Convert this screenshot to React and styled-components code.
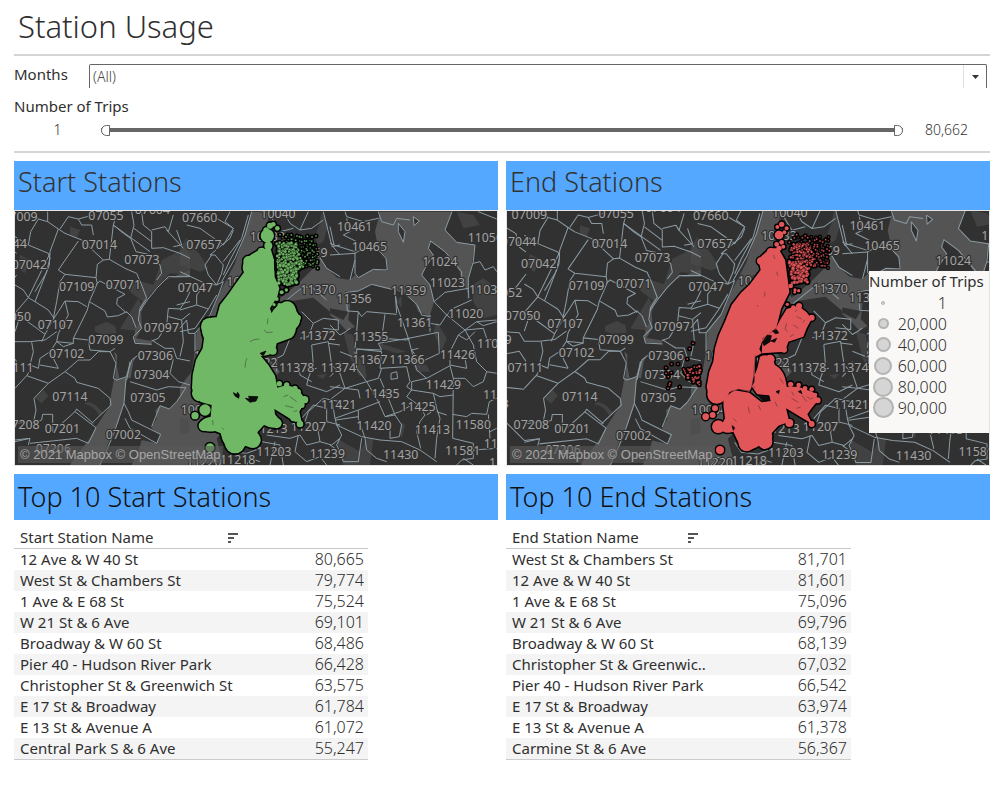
import React, { useState } from "react";
import styled, { createGlobalStyle } from "styled-components";

const GlobalStyle = createGlobalStyle`
  * { box-sizing: border-box; }
  body {
    margin: 0;
    background: #fff;
    color: #2f2f2f;
    font-family: "Noto Sans", "Open Sans", sans-serif;
    font-size: 15px;
    line-height: 20px;
  }
`;

const Page = styled.main`
  padding: 0 7px 40px 14px;
`;

const Title = styled.h1`
  margin: 0;
  height: 56px;
  padding: 6px 4px 0;
  border-bottom: 2px solid #d4d4d4;
  font-size: 31px;
  line-height: 40px;
  font-weight: 300;
`;

const Filters = styled.section`
  padding: 8px 0 11px;
  border-bottom: 2px solid #d4d4d4;
`;

const MonthRow = styled.div`
  display: grid;
  grid-template-columns: 75px 1fr;
  padding-right: 3px;
`;

const FieldLabel = styled.label`
  display: block;
`;

const SelectBox = styled.div`
  display: grid;
  grid-template-columns: 1fr 23px;
  height: 24px;
  border: 1px solid #666;
  border-bottom: 0;
  border-radius: 2px 2px 0 0;
`;

const MonthSelect = styled.select`
  grid-area: 1 / 1 / 2 / 3;
  appearance: none;
  border: 0;
  padding: 0 3px;
  background: transparent;
  color: #444;
  font: 300 14px/20px "Noto Sans", "Open Sans", sans-serif;
`;

const Caret = styled.span`
  grid-area: 1 / 2 / 2 / 3;
  display: grid;
  place-items: center;
  border-left: 1px solid #e0e0e0;
  pointer-events: none;
`;

const TripsFilter = styled.fieldset`
  margin: 8px 0 0;
  padding: 0;
  border: 0;
`;

const TripsLegend = styled.legend`
  padding: 0;
`;

const SliderRow = styled.div`
  display: grid;
  grid-template-columns: 87px 1fr 87px;
  align-items: center;
  margin-top: 4px;
  height: 20px;
`;

const SliderValue = styled.output`
  text-align: center;
  font-size: 14px;
  font-weight: 300;
  color: #333;
`;

const Range = styled.div`
  display: grid;
  align-items: center;
  height: 12px;
`;

const Rail = styled.div`
  grid-area: 1 / 1;
  height: 4px;
  background: #666;
`;

const RangeInput = styled.input`
  grid-area: 1 / 1;
  appearance: none;
  width: 100%;
  height: 12px;
  margin: 0;
  background: transparent;
  pointer-events: none;
  &::-webkit-slider-thumb {
    appearance: none;
    pointer-events: auto;
    width: 9px;
    height: 11px;
    background: #fff;
    border: 1px solid #666;
    border-radius: ${(p) => (p.$end ? "0 6px 6px 0" : "6px 0 0 6px")};
  }
`;

const Columns = styled.div`
  display: grid;
  grid-template-columns: 1fr 1fr;
  column-gap: 8px;
  padding-top: 8px;
`;

const Band = styled.h2`
  margin: 0;
  padding: ${(p) => (p.$strong ? "5px 4px" : "3px 4px 10px")};
  background: #55a8ff;
  color: ${(p) => (p.$strong ? "#111" : "#333")};
  font-size: 27px;
  line-height: 36px;
  font-weight: 300;
`;

const MapFrame = styled.div`
  position: relative;
  border: 1px solid #e4e4e4;
  background: #313131;
`;

const MapDrawing = styled.svg`
  display: block;
  width: 100%;
  height: auto;
  font-family: "Noto Sans", "Open Sans", sans-serif;
`;

const Attribution = styled.div`
  position: absolute;
  left: 3px;
  bottom: 2px;
  padding: 0 2px;
  background: rgba(90, 90, 90, 0.6);
  color: #a6a6a6;
  font: 13px/17px "Liberation Sans", Arial, sans-serif;
`;

const LegendCard = styled.aside`
  position: absolute;
  right: 0;
  top: 60px;
  width: 120px;
  height: 162px;
  background: #f9f8f7;
  white-space: nowrap;
`;

const LegendTitle = styled.h3`
  margin: 0;
  padding-bottom: 1px;
  font-size: 15px;
  line-height: 20px;
  font-weight: 400;
`;

const LegendList = styled.ul`
  margin: 0;
  padding: 0;
  list-style: none;
`;

const LegendItem = styled.li`
  display: grid;
  grid-template-columns: 28px 50px;
  align-items: center;
  height: 21px;
  font-size: 16px;
  font-weight: 300;
  text-align: right;
`;

const Dot = styled.span`
  justify-self: center;
  width: ${(p) => p.$size}px;
  height: ${(p) => p.$size}px;
  border: ${(p) => (p.$size > 8 ? 2 : 1)}px solid #b3b3b3;
  border-radius: 50%;
  background: #d5d5d5;
`;

const TableWrap = styled.div`
  padding-top: 8px;
`;

const Table = styled.table`
  width: ${(p) => p.$width}px;
  max-width: 100%;
  border-collapse: separate;
  border-spacing: 0;
  table-layout: fixed;
  border-bottom: 1px solid #ccc;
  white-space: nowrap;
`;

const NameHead = styled.th`
  width: ${(p) => p.$width}px;
  height: 20px;
  padding: 0 10px 1px 6px;
  border-bottom: 1px solid #c8c8c8;
  font-weight: 400;
  line-height: 19px;
`;

const ValueHead = styled.th`
  padding: 0;
  border-bottom: 1px solid #c8c8c8;
`;

const HeadContent = styled.div`
  display: flex;
  align-items: center;
  justify-content: space-between;
`;

const SortButton = styled.button`
  display: block;
  padding: 0;
  border: 0;
  background: transparent;
  line-height: 0;
`;

const Row = styled.tr`
  height: 21px;
  &:nth-child(even) { background: #f4f4f4; }
`;

const NameCell = styled.th`
  padding: 0 0 0 6px;
  font-weight: 400;
  line-height: 21px;
  text-align: left;
`;

const ValueCell = styled.td`
  padding: 0 4px 0 0;
  font-size: 16px;
  font-weight: 300;
  line-height: 21px;
  text-align: right;
`;

/* Map geometry. One drawing unit is a third of a pixel; each area has its own origin. */
const WEST = "translate(-15 -18)";
const MIDDLE = "translate(495 -18)";
const EAST = "translate(945 -18)";

const LAND_PATCHES = {
  west: [
    "M455 165 L525 130 540 150 540 210 480 205 455 230 400 290 365 265 350 245 380 225 430 240z",
    "M330 372 L385 280 400 310 385 345 385 378z",
    "M255 365 L290 350 315 362 320 385 275 388 255 380z",
    "M75 580 L100 555 115 572 95 595z",
    "M225 590 Q255 590 280 625 L268 632 Q250 600 225 598z",
    "M30 150 L60 165 45 205 25 190z",
    "M180 65 L210 75 200 100 180 90z",
  ],
  middle: [
    "M425 20 L445 60 430 110 412 120 405 90 418 60z",
    "M20 100 L60 150 85 190 60 200 0 180 0 130z",
    "M410 510 L440 507 428 523z",
    "M0 640 L25 640 30 680 0 690z",
  ],
  east: [
    "M40 380 L70 390 75 440 105 480 110 520 85 510 60 460z",
    "M320 350 L350 400 335 440 310 380z",
    "M425 240 L460 220 500 250 500 330 460 340 430 290z",
    "M380 20 L430 30 450 60 400 70z",
    "M150 415 L230 440 200 445 150 430z",
    "M215 650 L225 660 215 700 208 680z",
    "M200 290 L215 270 215 310z",
    "M245 470 L290 480 300 500 260 500z",
    "M20 700 L90 740 110 700 130 700 120 780 40 780z",
  ],
};

const WATER = {
  west: [
    "M312 522 L350 518 345 560 342 595 325 650 290 725 268 780 180 780 205 745 240 700 258 665 298 605 303 570z",
    "M312 440 L318 470 316 522 328 520 320 480 322 450z",
    "M345 518 L360 470 382 450 370 470 362 520z",
    "M375 375 L388 350 388 310 400 285 460 228 540 195 540 215 470 220 415 270 393 320 396 370 378 400 425 408 425 418 372 412z",
    "M545 548 L528 548 500 590 478 612 450 602 436 615 440 640 424 670 450 690 440 715 395 705 385 740 365 780 545 780z",
  ],
  middle: [
    "M215 20 L192 95 165 175 120 262 92 330 50 380 45 440 35 500 0 545 0 780 130 780 110 700 300 500 250 440 300 300 320 290 400 278 450 320 480 340 480 225 445 195 415 150 400 190 350 240 300 280 270 240 250 120 268 20z",
  ],
  east: [
    "M150 20 L366 20 345 75 380 112 435 120 425 180 415 230 420 285 405 240 395 230 390 200 345 140 300 108 295 130 310 150 285 190 275 210 300 240 312 290 300 330 300 378 290 330 265 320 255 295 230 270 195 255 165 250 125 238 85 258 45 258 60 300 55 345 75 365 50 378 25 350 0 330 0 215 60 225 75 210 85 218 130 193 175 198 168 160 145 130 135 80z",
  ],
};

const LAND_OVER = ["M205 55 L225 80 220 112 205 80z", "M250 35 L268 48 252 62z", "M55 320 L0 310 0 325 40 345z"];

const LINES = {
  west: [
    "-60,60 -10,90 0,130 20,145", "-60,290 -10,250 20,210", "-60,380 0,385 15,410 60,410 105,405 140,380", "-60,545 15,553", "-50,640 0,690 15,705 60,700", "-55,450 0,440 20,470",
    "70,20 85,42 113,50 113,20", "113,50 145,72 165,85 215,105 280,165 298,163 345,190 380,205 395,240 410,280 390,310 385,345 395,370 370,395 375,415 425,418",
    "85,42 62,80 55,120 115,145 120,160 108,205 75,260", "55,120 15,95", "145,72 120,140 118,180 75,290", "15,240 40,255 55,278 10,330", "55,278 120,145",
    "55,278 75,290 115,315 132,340 105,388 60,355 30,335 15,380", "105,388 95,410", "250,30 205,42 175,35 150,72", "205,42 215,60 245,60 250,90",
    "205,108 145,195 165,208 258,218 262,178 280,165", "298,163 310,60 340,85 362,100 378,140 425,150 450,180 455,205 440,225", "310,60 322,20", "362,100 372,60 365,20",
    "372,70 425,110 425,130 460,128 510,145 540,160", "310,60 420,140", "395,20 400,60 425,80 425,110", "425,75 465,65 475,80 490,30", "470,75 520,130", "500,75 515,120 490,125",
    "258,218 262,235 238,290 232,315 205,370 190,400 190,415 140,410", "238,290 285,318 292,336 325,332 350,320 365,335 378,368",
    "258,238 270,228 345,268 322,280 320,298 345,320 350,325", "165,208 150,230 140,290 130,340", "230,305 205,290 165,288 145,320 130,342", "165,288 175,330 145,385 140,410 120,440 145,490",
    "65,412 70,440 60,480 85,490 90,460 120,440", "145,490 90,480", "190,400 235,405 240,435 300,440 315,430", "190,415 160,425 140,410",
    "15,550 50,512 115,535 165,500 205,465 240,465 265,440 300,440 318,475 310,520 320,525 350,515 365,465 385,450", "50,512 65,490", "165,500 195,520 200,532 265,550 300,580 303,600 245,655",
    "115,535 72,580 78,615 70,655 95,645 98,628 128,628 128,680 195,620 258,668 235,715 200,700 60,715", "15,655 60,650", "15,710 60,700 55,720", "195,620 200,612 250,655",
    "348,520 342,595 355,620 365,645 452,688 440,715 360,670 345,640", "342,595 310,690 270,780", "425,405 465,430 490,430 500,460 540,468", "490,462 480,505 505,530 540,540",
    "540,215 475,215 440,250 412,285 388,320", "540,260 528,285 510,312 475,310 470,360 445,400 425,408", "475,335 515,345 540,325", "515,345 520,410 510,455",
    "360,530 440,555 475,545 528,548 500,590 478,612 450,602 425,665", "360,470 350,525", "500,300 540,290",
  ],
  middle: [
    "110,40 160,70 130,120 95,95 60,70 20,60", "150,20 135,50 160,70", "160,75 150,100 90,150 105,150 130,180 125,205 110,240 75,235 0,200", "75,180 95,150", "75,180 85,210 110,240",
    "215,20 195,90 165,160 125,230", "205,30 185,100 150,165 130,210", "180,105 130,170", "110,240 130,230 115,270 90,330 45,385 45,450", "0,315 50,300 50,270 70,245", "50,300 85,312 45,370 0,380", "85,312 110,270",
    "0,370 20,345 25,385 45,385", "310,20 330,55 360,75 395,70 430,45", "360,75 385,20", "270,30 300,80 340,70", "430,20 440,60 455,120 480,150", "415,150 440,190 480,215", "455,125 480,120",
    "270,350 290,310 320,285 370,245 400,250 440,285", "365,320 400,355 430,340 475,345 475,375 430,370", "400,355 385,395 360,400", "395,420 400,480 385,520 380,540 440,560 480,540", "395,420 445,410 455,480 475,500",
    "330,400 310,450 290,460 290,500", "355,480 360,510 395,530", "410,490 380,495", "445,415 480,420", "365,640 400,600 440,610 440,650 480,660", "375,650 385,620 430,580 480,590",
    "245,710 300,720 310,780", "285,710 270,780", "260,690 330,700 360,690 380,720 420,710 415,680 440,650", "355,690 345,740 380,770 420,755 440,780", "130,710 150,740 200,745 240,730", "60,780 80,755 120,760", "420,710 455,720 480,700",
    "200,780 210,760 240,770",
  ],
  east: [
    "45,20 50,35 100,50 145,40", "0,65 12,120 75,140 75,165 60,225", "12,120 0,115", "0,150 75,145", "75,145 100,130 145,135 168,160 172,195 130,193 85,218 75,205 75,165", "50,40 60,80 40,90 80,110", "145,20 155,50 190,60 200,40 240,45",
    "205,55 225,80 220,112 205,80 205,55", "250,35 268,48 252,62 250,35", "366,20 345,75 380,112 435,120 430,170 415,220 415,280", "445,20 500,42", "395,230 395,200 345,140 302,108 295,130 310,150 285,190 275,210 300,240 312,290",
    "430,175 450,170 465,195 490,185 500,200", "200,325 195,255 125,238 85,258 48,262 52,318 85,320 95,335 110,320 200,328", "165,328 155,400 230,405 240,400", "85,320 80,380 75,430", "195,255 200,300 235,400 260,495 290,520",
    "235,400 325,382 328,445 275,470", "235,400 145,415 155,435 80,432 80,460 30,440", "80,432 155,440 150,490 230,485 240,530 230,545 245,555", "230,270 262,300 275,330 300,335 300,380", "265,430 245,435 260,455",
    "300,330 300,355 330,360 350,330 312,290 345,262 415,250", "350,330 405,375 440,350 500,345", "350,330 370,310 425,285", "405,375 385,390 360,440 360,480 410,490 405,460", "440,350 460,362 500,350", "405,375 430,420 440,470 470,500 500,505", "405,375 460,370 470,400 500,410", "385,390 410,405 435,380",
    "290,520 360,482 370,520 405,520 430,545 460,530 470,500", "370,520 368,700", "368,628 410,635 425,625 470,628 478,590 500,580", "475,628 480,700", "368,700 430,715 430,760 395,765 380,780", "430,735 500,730", "480,680 500,670",
    "110,530 45,550 0,545", "110,530 80,490 75,440", "30,470 28,500 45,550 85,555 90,580", "45,550 5,580 15,640 85,615 150,590", "110,530 145,520 155,490", "110,530 145,590 165,635 195,630 175,580 150,520",
    "85,615 85,640 105,700 110,735", "165,635 210,620 245,600", "18,645 85,635", "195,630 215,660 208,695 180,700 180,660", "245,555 245,530 290,520", "245,555 230,575 265,600 285,630 270,650 260,680 272,730",
    "245,555 310,565 320,610 290,630", "310,565 330,575 370,570", "320,610 330,640 320,700 315,760", "350,630 320,620", "15,640 20,660 95,695 150,705 215,710 270,735 320,770", "20,660 35,690 20,720 30,740 0,720", "95,700 85,770 40,770 30,740",
    "183,505 183,523 203,520 200,500 183,505", "110,735 140,760 170,770", "0,500 10,505 0,515", "0,360 30,390 50,378 60,370", "400,760 430,780",
  ],
};

const LABELS = {
  west: [
    [30, 48, "07009"], [-2, 128, "07044"], [-44, 279, "07052"], [58, 193, "07042"], [288, 45, "07055"], [427, 26, "07604"], [268, 133, "07014"], [396, 176, "07073"], [200, 257, "07109"], [340, 251, "07071"],
    [10, 348, "07050"], [136, 371, "07107"], [-76, 417, "07079"], [288, 417, "07099"], [454, 381, "07097"], [170, 458, "07102"], [436, 466, "07306"], [18, 501, "07111"], [425, 521, "07304"], [180, 587, "07114"], [414, 590, "07305"],
    [-84, 609, "07083"], [36, 672, "07208"], [157, 683, "07201"], [340, 703, "07002"], [130, 745, "07206"],
  ],
  middle: [
    [59, 50, "07660"], [294, 40, "10040"], [72, 132, "07657"], [262, 108, "10033"], [390, 155, "10469"], [46, 262, "07047"], [192, 244, "10025"], [414, 268, "11370"], [414, 406, "11372"], [350, 501, "11378"], [475, 501, "11374"],
    [240, 487, "11222"], [55, 626, "10004"], [385, 678, "11207"], [270, 684, "11213"], [282, 754, "11203"], [442, 760, "11239"], [173, 778, "11218"], [72, 783, "11220"], [94, 465, "10011"],
  ],
  east: [
    [74, 79, "10461"], [118, 138, "10465"], [466, 110, "11050"], [330, 184, "11024"], [352, 246, "11023"], [236, 269, "11359"], [470, 267, "11030"], [72, 294, "11356"], [407, 340, "11020"], [254, 365, "11361"], [122, 408, "11355"],
    [494, 428, "11040"], [382, 461, "11426"], [120, 478, "11367"], [231, 478, "11366"], [340, 551, "11429"], [156, 580, "11435"], [512, 582, "11001"], [26, 612, "11421"], [264, 617, "11425"], [430, 671, "11580"], [132, 674, "11420"],
    [307, 686, "11413"], [398, 750, "11581"], [514, 730, "11552"], [212, 762, "11430"], [530, 785, "11550"],
  ],
};

const AREAS = [["west", WEST], ["middle", MIDDLE], ["east", EAST]];

function BaseMap({ transform }) {
  return (
    <g transform={transform}>
      {AREAS.map(([key, origin]) => (
        <g key={key} transform={origin}>
          {WATER[key].map((d) => <path key={d} d={d} fill="#545454" />)}
        </g>
      ))}
      {AREAS.map(([key, origin]) => (
        <g key={key} transform={origin}>
          {LAND_PATCHES[key].map((d) => <path key={d} d={d} fill="#4b4b4b" opacity="0.65" />)}
        </g>
      ))}
      <g transform={EAST}>{LAND_OVER.map((d) => <path key={d} d={d} fill="#313131" />)}</g>
      {AREAS.map(([key, origin]) => (
        <g key={key} transform={origin} fill="none" stroke="#8b9ba3" strokeWidth="3" strokeLinejoin="round">
          {LINES[key].map((points) => <polyline key={points} points={points} />)}
        </g>
      ))}
      {AREAS.map(([key, origin]) => (
        <g key={key} transform={origin} fontSize="37" textAnchor="middle" fill="#a3a3a3" stroke="#303030" strokeWidth="7" strokeLinejoin="round" paintOrder="stroke">
          {LABELS[key].map(([x, y, text]) => <text key={text} x={x} y={y}>{text}</text>)}
        </g>
      ))}
    </g>
  );
}

/* Fills a quadrilateral (four corners, clockwise) with slightly irregular rows of dots. */
function field(corners, columns, rows, radius, seed) {
  const [a, b, c, d] = corners;
  let s = seed;
  const next = () => {
    s = (s * 16807) % 2147483647;
    return s / 2147483647;
  };
  const dots = [];
  for (let row = 0; row < rows; row += 1) {
    for (let col = 0; col < columns; col += 1) {
      const u = (col + next()) / columns;
      const v = (row + next()) / rows;
      const mix = (i) => (a[i] * (1 - u) + b[i] * u) * (1 - v) + (d[i] * (1 - u) + c[i] * u) * v;
      const keep = next();
      if (keep > 0.08) dots.push([Math.round(mix(0)), Math.round(mix(1)), radius + Math.round(keep)]);
    }
  }
  return dots;
}

const GREEN = {
  color: "#70b865",
  origin: MIDDLE,
  body: "M245 132 Q215 145 195 163 Q183 185 192 202 L168 235 145 268 120 300 110 337 Q80 335 68 360 Q62 380 72 400 L68 430 48 465 38 510 36 550 Q45 590 75 595 L95 600 92 635 Q60 640 60 662 Q70 685 105 678 L122 685 Q130 730 165 742 Q185 742 195 722 Q225 735 242 708 L232 682 252 660 Q290 680 304 652 L285 628 283 612 345 650 365 650 358 620 378 585 352 550 320 540 292 548 285 512 265 480 242 452 Q285 455 290 415 L325 402 Q345 398 348 370 Q372 345 350 320 Q345 290 315 290 Q285 300 275 325 L270 310 292 275 298 250 284 215 282 165 272 132z",
  circles: [
    [262, 92, 20], [270, 62, 9], [292, 70, 7], [258, 75, 8], [280, 58, 7], [265, 122, 12], [245, 140, 12], [205, 168, 15], [45, 632, 11], [75, 615, 17], [72, 662, 16], [90, 728, 13], [290, 655, 15], [360, 657, 10], [374, 584, 11], [298, 536, 8],
    [355, 560, 8], [320, 540, 8], [345, 550, 8], [278, 437, 12], [60, 565, 24], [165, 715, 30], [218, 705, 24], [90, 365, 27], [322, 313, 24], [365, 600, 9], [340, 640, 9], [355, 338, 8], [298, 300, 6], [282, 299, 5], [305, 262, 6], [319, 255, 5], [290, 282, 6],
  ],
  small: [
    ...field([[298, 86], [412, 92], [414, 192], [350, 182]], 11, 10, 2, 71),
    ...field([[290, 112], [350, 115], [372, 190], [292, 200]], 11, 11, 4, 19),
    ...field([[290, 165], [350, 185], [350, 235], [296, 242]], 8, 8, 5, 37),
  ],
  gaps: ["M160 563 L170 568 173 562 178 570 176 580 165 573z", "M196 580 L210 582 205 574 234 575 228 588 210 592z", "M240 445 L258 438 250 452z", "M283 168 L290 172 290 205 284 195z"],
  marks: ["201,460 197,470 195,488", "264,340 262,358", "252,375 260,382 278,382", "210,410 222,404 238,402", "315,602 340,608", "330,575 350,590", "98,645 99,660", "127,668 131,674", "310,575 325,570", "340,620 352,616"],
};

const RED = {
  color: "#e15659",
  origin: "translate(489 -18)",
  body: "M300 130 L265 162 272 195 240 238 212 265 185 300 165 350 147 390 135 430 130 470 118 500 110 545 Q115 585 145 592 Q170 590 178 562 L205 553 238 560 253 530 256 455 275 445 278 400 318 372 333 312 358 262 352 215 345 165 325 130z M270 455 Q300 440 315 480 Q345 495 350 545 L385 545 430 562 445 585 425 610 412 628 428 658 348 610 358 650 325 662 305 685 Q315 715 270 720 Q230 750 205 712 L190 680 Q160 690 150 668 L165 640 160 600 Q165 570 195 556 L238 563 262 582 275 592 302 588 298 572 262 568 246 545 250 520 262 490z M350 312 L385 302 410 322 425 342 410 370 400 395 355 410 345 440 275 445 268 432 280 400 318 370 330 345z",
  circles: [
    [327, 90, 13], [335, 58, 8], [322, 66, 6], [350, 70, 6], [343, 82, 6], [320, 118, 7], [335, 112, 7], [327, 130, 8], [340, 125, 6], [302, 140, 11], [272, 168, 11], [107, 635, 10], [135, 610, 9], [128, 630, 9], [145, 665, 19], [150, 735, 12], [140, 568, 28],
    [230, 715, 24], [285, 710, 22], [180, 590, 20], [425, 657, 9], [358, 654, 12], [443, 586, 9], [342, 434, 9], [425, 338, 9], [387, 303, 9], [370, 308, 7], [352, 298, 5], [362, 538, 8], [386, 540, 7], [405, 550, 7], [425, 553, 7], [435, 570, 7], [300, 463, 14], [375, 255, 5], [386, 257, 5], [362, 243, 7], [374, 262, 4],
  ],
  small: [
    ...field([[364, 85], [480, 96], [476, 190], [410, 184]], 10, 10, 2, 53),
    ...field([[358, 112], [420, 115], [436, 190], [358, 200]], 10, 10, 3, 23),
    ...field([[358, 165], [415, 185], [415, 232], [366, 235]], 7, 7, 5, 29),
    ...field([[40, 488], [94, 482], [92, 542], [48, 528]], 6, 6, 3, 97),
    [69, 415, 3], [59, 431, 3], [52, 462, 3], [24, 477, 3], [5, 477, 3], [4, 503, 3], [29, 546, 3], [-2, 540, 3], [-12, 488, 3], [-5, 515, 3], [-12, 505, 3], [-6, 550, 3], [0, 535, 3],
  ],
  gaps: ["M277 412 L292 390 304 392 300 410 282 422z", "M308 378 L320 374 326 384 316 386z", "M302 408 L320 400 314 412z", "M262 570 L296 572 298 586 280 588z", "M186 662 L194 668 190 676z", "M318 560 L328 556 326 566z", "M385 560 L392 556 396 566z"],
  marks: ["180,560 205,553 240,558 256,545", "256,450 250,520 244,552", "345,500 350,540", "285,260 284,275", "262,300 264,305", "310,150 315,162", "380,335 395,342", "370,360 385,370", "235,605 238,625", "265,600 272,615", "190,640 200,650", "330,520 340,535", "365,580 385,592", "395,570 410,590", "315,590 322,605", "320,200 323,212", "375,320 382,315", "350,355 345,372 352,380", "405,345 398,352", "360,395 372,388", "410,575 422,582 430,578", "380,610 392,606", "365,560 372,572"],
};

function TripDots({ data }) {
  return (
    <g transform={data.origin} strokeLinejoin="round">
      <g fill="#000" stroke="#000" strokeWidth="9">
        <path d={data.body} />
        {[...data.circles, ...data.small].map(([x, y, r], i) => <circle key={i} cx={x} cy={y} r={r} />)}
      </g>
      <g fill={data.color}>
        {data.small.map(([x, y, r], i) => <circle key={i} cx={x} cy={y} r={r} stroke="#000" strokeWidth="1" />)}
        <path d={data.body} />
        {data.circles.map(([x, y, r], i) => <circle key={i} cx={x} cy={y} r={r} />)}
      </g>
      {data.gaps.map((d) => <path key={d} d={d} fill="#0c0c0c" stroke="#000" strokeWidth="2" />)}
      <g fill="none" stroke="#242424" strokeOpacity="0.65" strokeWidth="2">
        {data.marks.map((points) => <polyline key={points} points={points} />)}
      </g>
    </g>
  );
}

function StationMap({ name, data, base, children }) {
  return (
    <MapFrame>
      <MapDrawing viewBox="0 0 1446 762" role="img" aria-label={name}>
        <BaseMap transform={base} />
        <TripDots data={data} />
      </MapDrawing>
      <Attribution>© 2021 Mapbox © OpenStreetMap</Attribution>
      {children}
    </MapFrame>
  );
}

const SIZES = [["1", 4], ["20,000", 11], ["40,000", 15], ["60,000", 18], ["80,000", 20], ["90,000", 21]];

function TripsSizeLegend() {
  return (
    <LegendCard>
      <LegendTitle>Number of Trips</LegendTitle>
      <LegendList>
        {SIZES.map(([label, size]) => (
          <LegendItem key={label}><Dot $size={size} />{label}</LegendItem>
        ))}
      </LegendList>
    </LegendCard>
  );
}

const START = [
  ["12 Ave & W 40 St", "80,665"], ["West St & Chambers St", "79,774"], ["1 Ave & E 68 St", "75,524"], ["W 21 St & 6 Ave", "69,101"], ["Broadway & W 60 St", "68,486"],
  ["Pier 40 - Hudson River Park", "66,428"], ["Christopher St & Greenwich St", "63,575"], ["E 17 St & Broadway", "61,784"], ["E 13 St & Avenue A", "61,072"], ["Central Park S & 6 Ave", "55,247"],
];
const END = [
  ["West St & Chambers St", "81,701"], ["12 Ave & W 40 St", "81,601"], ["1 Ave & E 68 St", "75,096"], ["W 21 St & 6 Ave", "69,796"], ["Broadway & W 60 St", "68,139"],
  ["Christopher St & Greenwic..", "67,032"], ["Pier 40 - Hudson River Park", "66,542"], ["E 17 St & Broadway", "63,974"], ["E 13 St & Avenue A", "61,378"], ["Carmine St & 6 Ave", "56,367"],
];

function StationTable({ heading, rows, width, nameWidth }) {
  return (
    <TableWrap>
      <Table $width={width}>
        <thead>
          <tr>
            <NameHead $width={nameWidth} scope="col">
              <HeadContent>
                {heading}
                <SortButton type="button" aria-label={`Sort by ${heading}`}>
                  <svg width="10" height="10" viewBox="0 0 10 10" fill="#555">
                    <path d="M0 0h10v2H0zM0 4h6v2H0zM0 8h3v2H0z" />
                  </svg>
                </SortButton>
              </HeadContent>
            </NameHead>
            <ValueHead aria-label="Trips" scope="col" />
          </tr>
        </thead>
        <tbody>
          {rows.map(([name, value]) => (
            <Row key={name}><NameCell scope="row">{name}</NameCell><ValueCell>{value}</ValueCell></Row>
          ))}
        </tbody>
      </Table>
    </TableWrap>
  );
}

const MAX_TRIPS = 80662;

export default function App() {
  const [low, setLow] = useState(1);
  const [high, setHigh] = useState(MAX_TRIPS);
  return (
    <>
      <GlobalStyle />
      <Page>
        <Title>Station Usage</Title>
        <Filters>
          <MonthRow>
            <FieldLabel htmlFor="months">Months</FieldLabel>
            <SelectBox>
              <MonthSelect id="months"><option>(All)</option></MonthSelect>
              <Caret><svg width="7" height="4" viewBox="0 0 7 4"><path d="M0 0h7L3.500 4z" fill="#333" /></svg></Caret>
            </SelectBox>
          </MonthRow>
          <TripsFilter>
            <TripsLegend>Number of Trips</TripsLegend>
            <SliderRow>
              <SliderValue>{low.toLocaleString("en-US")}</SliderValue>
              <Range>
                <Rail />
                <RangeInput type="range" aria-label="Minimum number of trips" min="1" max={MAX_TRIPS} value={low} onChange={(e) => setLow(Math.min(Number(e.target.value), high))} />
                <RangeInput $end type="range" aria-label="Maximum number of trips" min="1" max={MAX_TRIPS} value={high} onChange={(e) => setHigh(Math.max(Number(e.target.value), low))} />
              </Range>
              <SliderValue>{high.toLocaleString("en-US")}</SliderValue>
            </SliderRow>
          </TripsFilter>
        </Filters>
        <Columns>
          <section>
            <Band>Start Stations</Band>
            <StationMap name="Map of start stations" data={GREEN} />
          </section>
          <section>
            <Band>End Stations</Band>
            <StationMap name="Map of end stations" data={RED} base="translate(52 -5) scale(1.0095)">
              <TripsSizeLegend />
            </StationMap>
          </section>
        </Columns>
        <Columns>
          <section>
            <Band $strong>Top 10 Start Stations</Band>
            <StationTable heading="Start Station Name" rows={START} width={354} nameWidth={234} />
          </section>
          <section>
            <Band $strong>Top 10 End Stations</Band>
            <StationTable heading="End Station Name" rows={END} width={345} nameWidth={202} />
          </section>
        </Columns>
      </Page>
    </>
  );
}
